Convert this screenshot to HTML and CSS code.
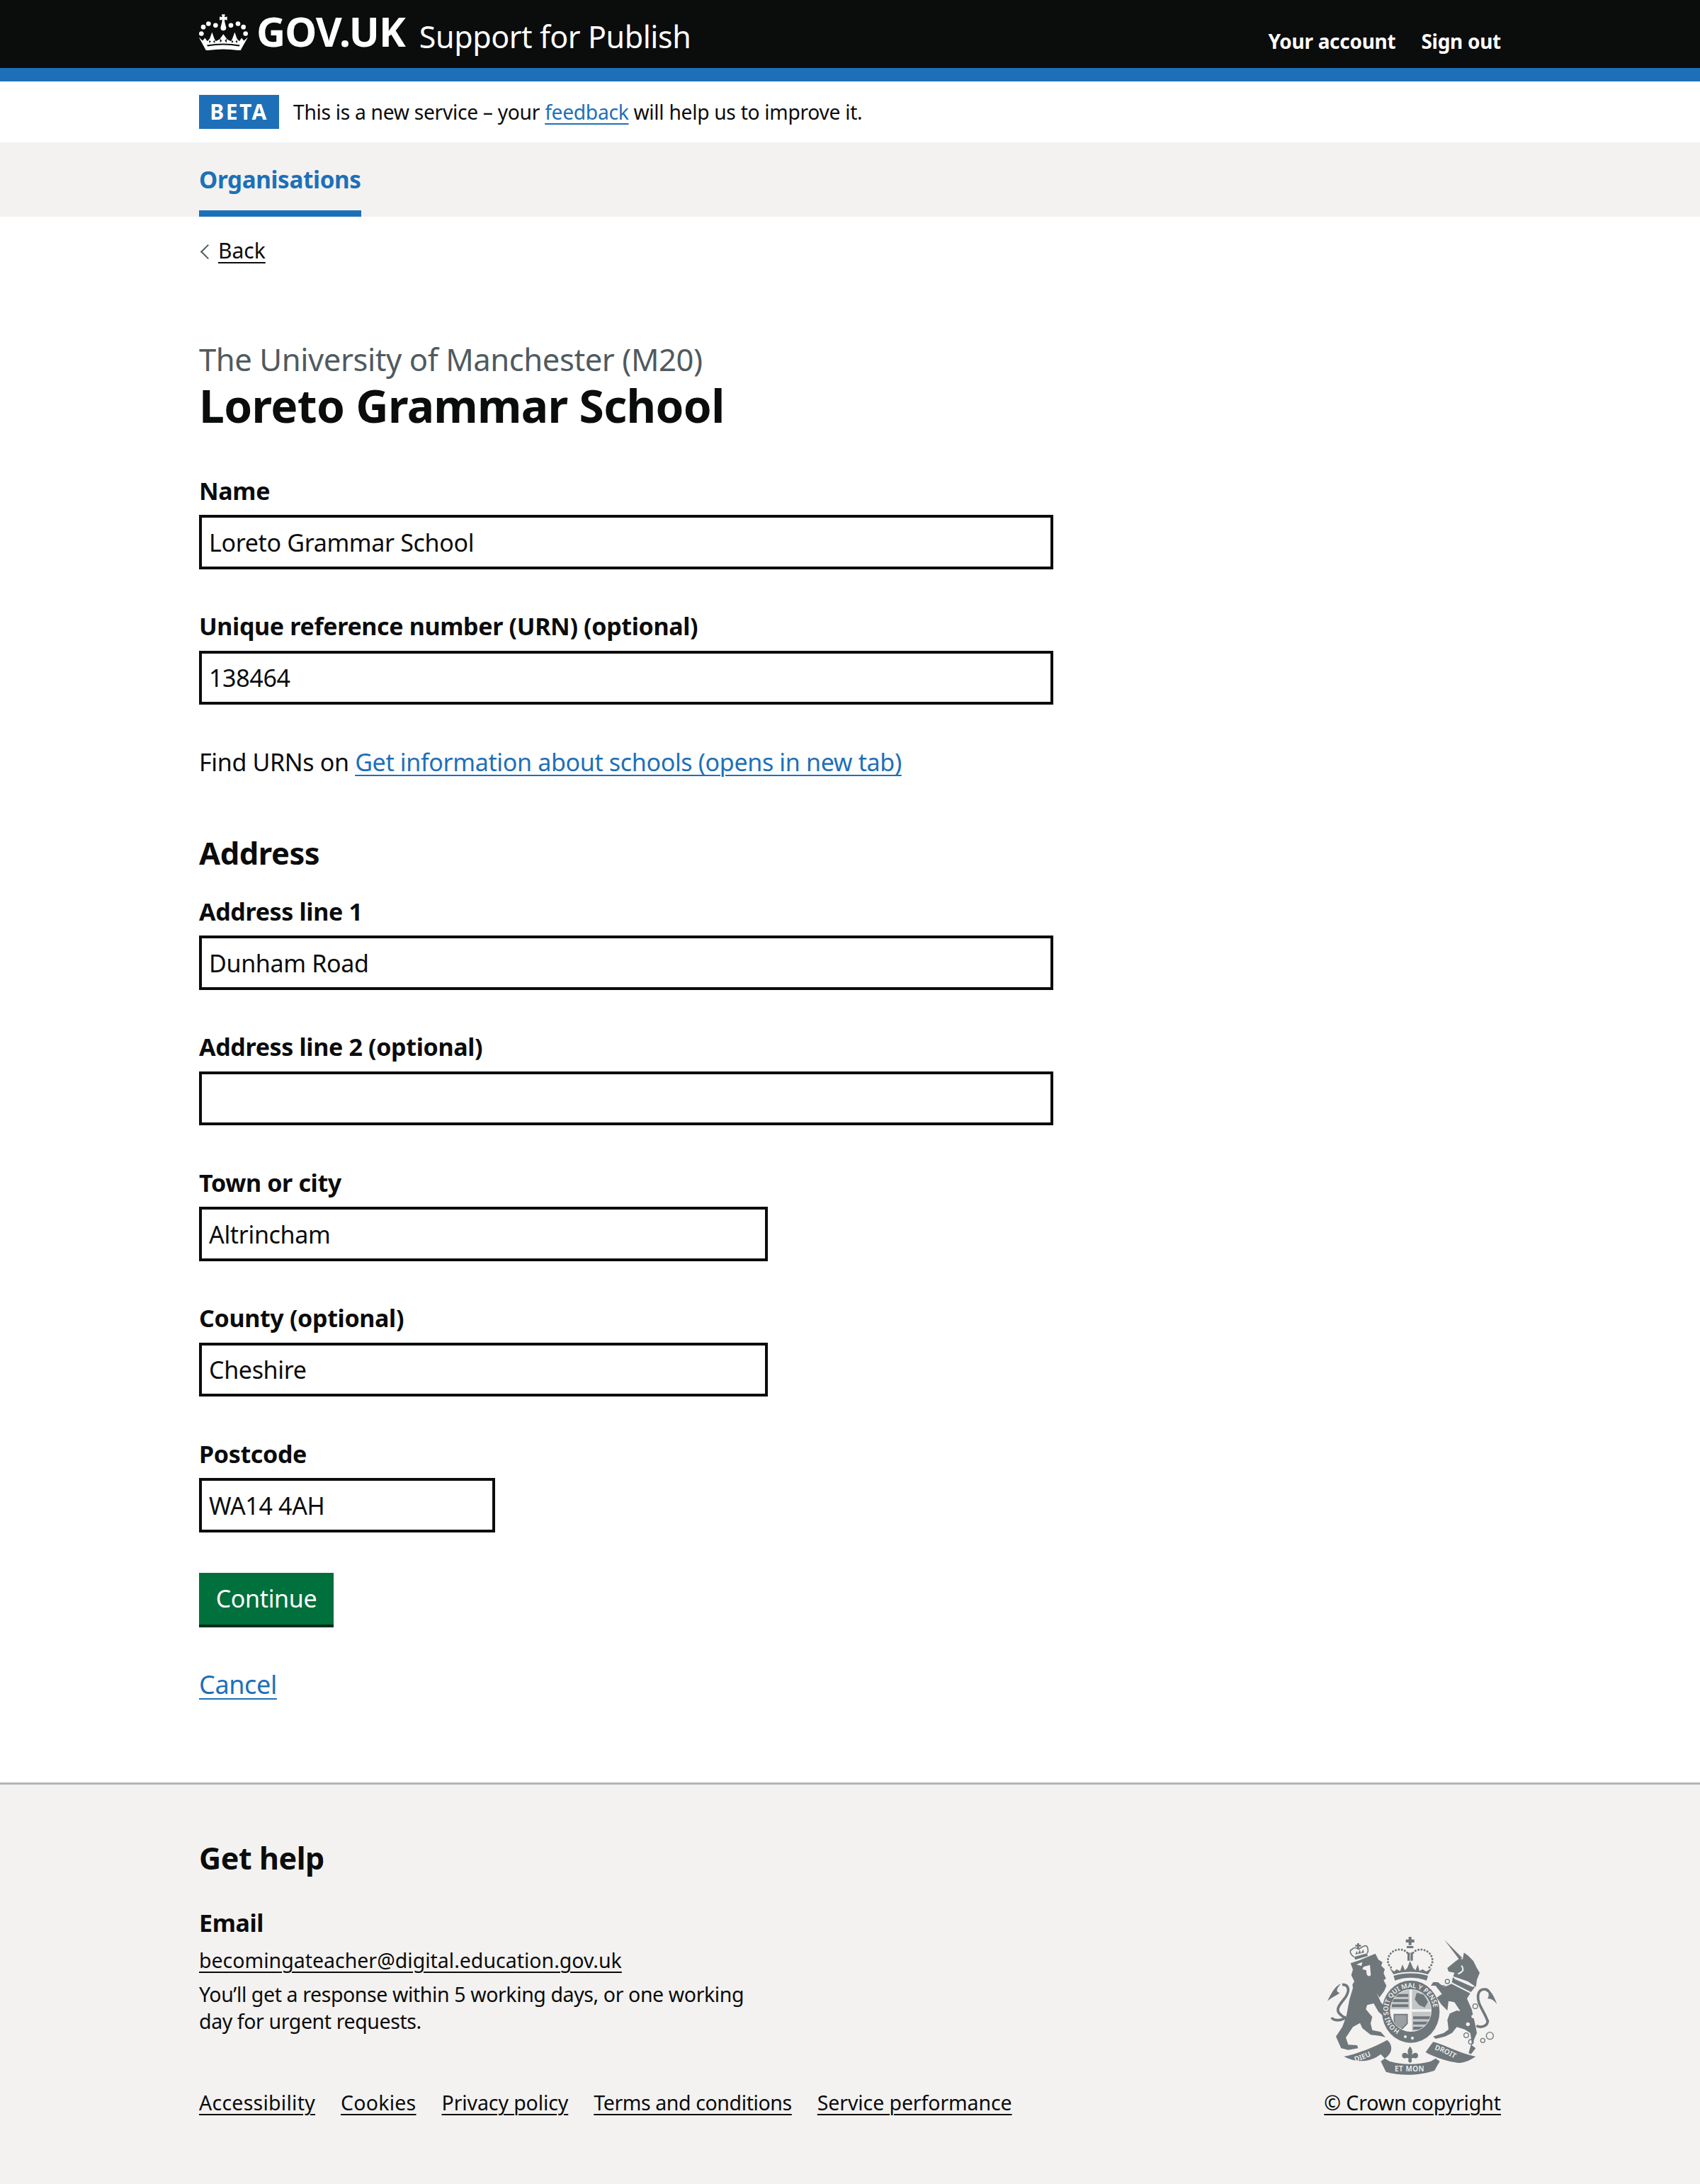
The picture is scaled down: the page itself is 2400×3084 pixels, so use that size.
FILE: index.html
```html
<!DOCTYPE html>
<html lang="en">
<head>
<meta charset="utf-8">
<title>Loreto Grammar School - Support for Publish</title>
<link rel="stylesheet" href="styles.css">
</head>
<body>
<header class="top">
  <div class="wrap top-inner">
    <a class="brand" href="#">
      <svg class="crown" viewBox="15 18 207 152" aria-hidden="true">
        <g fill="#fff">
          <path d="M111 18h14l-2 12 11-2v15l-11-2 1 10 6 24c0 8-5 12-12 12s-12-4-12-12l6-24 1-10-11 2V28l11 2z"/>
          <circle cx="85" cy="65" r="10"/><circle cx="55" cy="58" r="10"/><circle cx="33" cy="72" r="10"/><circle cx="25" cy="100" r="10"/>
          <circle cx="150" cy="65" r="10"/><circle cx="180" cy="58" r="10"/><circle cx="203" cy="72" r="10"/><circle cx="212" cy="100" r="10"/>
          <path d="M45 172Q118 160 190 172L222 115 205 130 195 118 186 132 176 122 166 94 156 122 150 132 134 124 118 102 102 124 86 132 80 122 70 94 60 122 50 132 40 118 30 130 14 115Z"/>
        </g>
        <g fill="#0b0c0c">
          <path d="M48 148Q118 136 188 148L185 154Q118 142 51 154Z"/>
          <path d="M58 128l8 6-8 6zM82 128l-8 6 8 6zM104 122l8 8-8 8zM132 122l-8 8 8 8zM153 128l8 6-8 6zM177 128l-8 6 8 6z"/>
        </g>
      </svg>
      <span class="gov">GOV.UK</span>
    </a>
    <a class="service" href="#">Support for Publish</a>
    <nav class="account">
      <a href="#">Your account</a>
      <a href="#">Sign out</a>
    </nav>
  </div>
</header>

<div class="wrap banner">
  <strong class="tag">Beta</strong>
  <span class="banner-text">This is a new service – your <a class="link" href="#">feedback</a> will help us to improve it.</span>
</div>

<nav class="subnav">
  <div class="wrap"><a class="subnav-item" href="#">Organisations</a></div>
</nav>

<main class="wrap">
  <a class="back" href="#">Back</a>

  <form class="form">
    <span class="caption">The University of Manchester (M20)</span>
    <h1 class="title">Loreto Grammar School</h1>

    <div class="field">
      <label class="label" for="name">Name</label>
      <input class="input" id="name" value="Loreto Grammar School">
    </div>
    <div class="field">
      <label class="label" for="urn">Unique reference number (URN) (optional)</label>
      <input class="input" id="urn" value="138464">
    </div>
    <p class="body">Find URNs on <a class="link" href="#">Get information about schools (opens in new tab)</a></p>

    <h2 class="section">Address</h2>
    <div class="field">
      <label class="label" for="a1">Address line 1</label>
      <input class="input" id="a1" value="Dunham Road">
    </div>
    <div class="field">
      <label class="label" for="a2">Address line 2 (optional)</label>
      <input class="input" id="a2" value="">
    </div>
    <div class="field">
      <label class="label" for="town">Town or city</label>
      <input class="input w-two-thirds" id="town" value="Altrincham">
    </div>
    <div class="field">
      <label class="label" for="county">County (optional)</label>
      <input class="input w-two-thirds" id="county" value="Cheshire">
    </div>
    <div class="field">
      <label class="label" for="postcode">Postcode</label>
      <input class="input w-third" id="postcode" value="WA14 4AH">
    </div>
    <button class="button" type="button">Continue</button>
    <p class="cancel"><a class="link" href="#">Cancel</a></p>
  </form>
</main>

<footer class="footer">
  <div class="wrap footer-inner">
    <div class="footer-left">
      <h2 class="help-title">Get help</h2>
      <h3 class="help-sub">Email</h3>
      <p class="help-line"><a class="flink" href="#">becomingateacher@digital.education.gov.uk</a></p>
      <p class="help-text">You’ll get a response within 5 working days, or one working day for urgent requests.</p>
      <ul class="footer-links">
        <li><a class="flink" href="#">Accessibility</a></li>
        <li><a class="flink" href="#">Cookies</a></li>
        <li><a class="flink" href="#">Privacy policy</a></li>
        <li><a class="flink" href="#">Terms and conditions</a></li>
        <li><a class="flink" href="#">Service performance</a></li>
      </ul>
    </div>
    <div class="footer-right">
      <svg class="crest" viewBox="0 0 780 630" role="img" aria-label="Royal coat of arms">
        <defs>
          <clipPath id="shield"><ellipse cx="395" cy="345" rx="86" ry="88"/></clipPath>
          <path id="ring" d="M395 441a96 96 0 1 1 .1 0"/>
          <path id="dieu" d="M160 562C195 552 230 538 270 515"/>
          <path id="droit" d="M495 510C535 522 575 545 610 568"/>
        </defs>
        <g class="c-fill">
          <!-- lion -->
          <path d="M140 145L178 132 245 104 258 130 275 140 270 155 285 170 280 187 290 210 280 217 292 240 283 262 262 290 250 270 268 310 298 345 310 372 292 395 282 372 258 350 238 315 210 322 205 340 232 372 225 400 232 428 268 436 288 458 262 452 225 448 190 420 180 398 150 415 120 460 130 490 168 492 172 505 130 512 100 505 78 455 105 415 122 370 135 300 150 250 148 235 156 222 143 195 150 172Z"/>
          <path d="M100 232C75 240 60 270 42 305 60 290 75 285 95 270 80 270 75 255 100 232Z"/>
          <path class="c-line" d="M122 372C95 395 65 385 60 375M115 375C70 350 85 330 110 300 140 265 135 235 105 235"/>
          <path d="M155 118L210 103 213 114 160 130Z"/>
          <path d="M168 60h8v7h8v7h-8v12h-8V74h-8v-7h8z"/>
          <path class="c-thin" d="M155 118C135 105 135 88 148 85 155 72 172 85 175 85 185 78 210 60 212 80 216 90 212 100 210 103"/>
          <path d="M160 108l6-16 5 13 8-18 5 15 10-16 3 14z"/>
        </g>
        <path class="c-bg" d="M165 150L190 140 186 156ZM195 160L222 152 226 195C216 206 205 195 207 175L190 170Z"/>
        <g class="c-fill">
          <!-- central crown -->
          <path d="M386 33h12v11h12v13h-12v11h-12V57h-12V44h12zM378 72h28v9h-28zM381 100h10v34h-10zM394 100h10v34h-10z"/>
          <path class="c-thin c-dash" d="M380 100C365 80 315 80 300 120 295 140 300 155 315 165M405 100C420 80 470 80 485 120 490 140 485 155 470 165"/>
          <path d="M305 165L322 192C365 178 425 178 468 192L485 165 460 180 445 170 432 178 425 150 415 175 405 165 392 135 380 165 370 175 360 150 350 178 335 170 325 180Z"/>
          <path d="M322 198C365 184 425 184 468 198L462 218C420 202 370 202 328 218Z"/>
          <!-- garter -->
          <ellipse cx="395" cy="350" rx="122" ry="132"/>
        </g>
        <ellipse class="c-bg" cx="395" cy="345" rx="88" ry="90"/>
        <g clip-path="url(#shield)">
          <path class="c-tex" d="M305 255h85v85h-85zM400 255h85v85h-85zM400 350h85v85h-85z"/>
          <path class="c-dark" d="M315 275h70v12h-70zM315 297h70v12h-70zM315 319h70v12h-70zM405 370h75v12h-75zM405 392h75v12h-75zM405 414h75v12h-75zM420 270l30 8 18 30-14 24-24-10-18-24z"/>
          <path class="c-harp" d="M325 362h55v38l-27 28-28-28z"/>
        </g>
        <circle class="c-bg" cx="372" cy="456" r="6"/>
        <circle class="c-bg" cx="402" cy="462" r="6"/>
        <text class="c-text c-ring"><textPath href="#ring" startOffset="8%">HONI SOIT QUI MAL Y PENSE</textPath></text>
        <g class="c-fill">
          <path d="M112 540C165 530 240 500 295 470 320 490 320 525 285 548L268 530C230 560 170 572 112 540Z"/>
          <path d="M268 560L285 548 305 560C360 576 425 576 480 560L500 548 518 560 495 600C430 622 345 622 290 605Z"/>
          <path d="M490 478C540 490 600 525 670 540 640 562 600 572 585 565 550 560 500 545 458 522 470 505 480 490 490 478Z"/>
          <path d="M392 497C402 510 405 520 398 535 405 525 418 520 425 530 430 545 415 552 408 545L398 548 400 560 392 568 384 560 386 548 376 545C369 552 354 545 359 530 366 520 379 525 386 535 379 520 382 510 392 497Z"/>
        </g>
        <text class="c-text c-motto"><textPath href="#dieu">DIEU</textPath></text>
        <text class="c-text c-motto" x="390" y="604" text-anchor="middle">ET MON</text>
        <text class="c-text c-motto"><textPath href="#droit">DROIT</textPath></text>
        <!-- unicorn -->
        <g class="c-fill" transform="translate(375 0)">
          <path d="M162 45L238 122 226 130Z"/>
          <path d="M175 165L205 140 225 125 240 128 245 100 262 112 285 135 300 165 312 185 300 215 296 245 262 222 200 200 205 185 180 180Z"/>
          <path d="M198 205L292 245 275 267 194 226Z"/>
          <path d="M192 232L272 272 258 295 278 340 292 400 300 440 278 492 295 505 275 530 265 525 278 480 272 440 248 425 215 415 195 440 165 455 125 465 115 455 160 440 180 425 175 385 185 358 215 345 230 348 205 310 180 305 175 345 150 320 130 290 152 275 125 240 105 240 115 225 135 225 160 245 175 240Z"/>
          <path d="M340 250C360 260 375 290 385 318 370 300 360 295 345 295 355 280 350 265 335 255Z"/>
          <path class="c-line" d="M298 410C320 420 350 410 345 385M347 395C335 350 300 320 305 280 310 250 340 250 350 265"/>
          <path class="c-gap" d="M235 155C245 170 245 180 220 190M205 208L285 243"/>
          <circle class="c-bg" cx="285" cy="370" r="8"/><circle class="c-bg" cx="262" cy="403" r="8"/>
        </g>
        <g class="c-rings" transform="translate(375 0)">
          <circle cx="175" cy="222" r="9"/><circle cx="158" cy="247" r="7"/><circle cx="165" cy="300" r="9"/>
          <circle cx="293" cy="327" r="10"/><circle cx="255" cy="450" r="10"/><circle cx="275" cy="478" r="10"/>
          <circle cx="325" cy="472" r="9"/><circle cx="355" cy="452" r="15"/>
        </g>
      </svg>
      <a class="flink" href="#">© Crown copyright</a>
    </div>
  </div>
</footer>
</body>
</html>
```
FILE: styles.css
```css
* { box-sizing: border-box; letter-spacing: -.01em; }
html, body { margin: 0; padding: 0; }
body {
  font-family: "Noto Sans", "Liberation Sans", sans-serif;
  font-size: 34px;
  line-height: 47.9px;
  color: #0b0c0c;
  background: #fff;
}
a { color: inherit; }
.wrap { width: 1838px; margin: 0 auto; }

.top { background: #0b0c0c; border-bottom: 19px solid #1d70b8; height: 115px; color: #fff; }
.top-inner { display: flex; align-items: flex-start; height: 96px; }
.brand { display: flex; align-items: flex-start; color: #fff; text-decoration: none; padding-top: 20px; }
.crown { width: 69px; height: 51px; display: block; }
.gov { font-weight: 700; font-size: 57px; line-height: 48px; margin-left: 12px; letter-spacing: -1px; }
.service { color: #fff; text-decoration: none; font-size: 43px; line-height: 56px; margin: 24px 0 0 20px; }
.account { margin-left: auto; display: flex; gap: 36px; padding-top: 34px; }
.account a { color: #fff; font-weight: 700; font-size: 28px; line-height: 48px; text-decoration: none; }

.banner { height: 86px; display: flex; align-items: center; gap: 20px; font-size: 28.2px; }
.tag {
  background: #1d70b8; color: #fff; text-transform: uppercase;
  font-size: 30px; line-height: 48px; height: 48px; width: 113px; text-align: center; letter-spacing: 2.4px;
}
.banner-text { line-height: 40px; }
.link { color: #1d70b8; text-decoration-thickness: 2px; text-underline-offset: .16em; }

.subnav { background: #f3f2f1; height: 105px; }
.subnav-item {
  display: inline-block; height: 105px; padding-top: 29px; color: #1d70b8; font-weight: 700; text-decoration: none;
  border-bottom: 9px solid #1d70b8; font-size: 33.2px; line-height: 48px;
}

.back {
  display: inline-block; position: relative; margin-top: 29px; padding-left: 27px; font-size: 30px; line-height: 38px;
  text-decoration-thickness: 2px; text-underline-offset: .16em; letter-spacing: 0;
}
.back::before {
  content: ""; position: absolute; left: 5px; top: 13px; width: 13px; height: 13px;
  border-left: 2px solid #505a5f; border-bottom: 2px solid #505a5f; transform: rotate(45deg);
}

.form { padding-top: 102px; }
.caption { display: block; color: #505a5f; font-size: 43.6px; line-height: 56px; }
.title { font-size: 64px; line-height: 76px; margin: 0 0 59px; font-weight: 700; }
.field { margin-bottom: 57.4px; }
.label { display: block; font-weight: 700; margin-bottom: 9.6px; font-size: 34px; line-height: 47.9px; }
.input {
  display: block; width: 1206px; height: 76.6px; border: 4px solid #0b0c0c; padding: 8px 10px; border-radius: 0;
  font: inherit; color: #0b0c0c; background: #fff; outline: 0;
}
.w-two-thirds { width: 803px; }
.w-third { width: 418px; }
.body { margin: 0 0 75px; }
.section { font-size: 43.5px; line-height: 56px; margin: 0 0 32px; font-weight: 700; }
.button {
  display: block; width: 190px; height: 77px; background: #00703c; color: #fff; border: 0; border-radius: 0;
  font: inherit; padding: 0 0 4px; box-shadow: inset 0 -4px 0 #002d18; margin: 0 0 57px;
}
.cancel { margin: 0 0 114px; font-size: 36px; }

.footer { background: #f3f2f1; border-top: 3px solid #b1b4b6; height: 567px; font-size: 28.5px; line-height: 38px; }
.footer * { letter-spacing: 0; }
.footer-inner { display: flex; justify-content: space-between; align-items: flex-end; padding-top: 76px; }
.footer-left { flex: 1; }
.footer .help-title { font-size: 43px; line-height: 56px; margin: 0 0 39px; font-weight: 700; letter-spacing: -.01em; }
.footer .help-sub { font-size: 34px; line-height: 48px; margin: 0 0 10px; font-weight: 700; letter-spacing: -.01em; }
.help-line { margin: 0 0 10px; }
.footer .help-text { margin: 0; width: 800px; letter-spacing: -.4px; }
.flink { color: #0b0c0c; text-decoration-thickness: 2px; text-underline-offset: .16em; }
.footer-right { display: flex; flex-direction: column; align-items: flex-end; flex: none; }
.footer-right .flink { letter-spacing: -.1px; }
.crest { display: block; width: 260px; height: 210px; margin: 0 -1px 16px 0; flex: none; }
.c-fill { fill: #6f777b; }
.c-bg { fill: #f3f2f1; }
.c-line { fill: none; stroke: #6f777b; stroke-width: 11; }
.c-thin { fill: none; stroke: #6f777b; stroke-width: 5; }
.c-gap { fill: none; stroke: #f3f2f1; stroke-width: 6; }
.c-dash { stroke-width: 9; stroke-dasharray: .1 13; stroke-linecap: round; }
.c-tex { fill: #c3c6c8; }
.c-dark { fill: #6f777b; }
.c-harp { fill: #9aa0a3; stroke: #6f777b; stroke-width: 5; }
.c-rings { fill: none; stroke: #6f777b; stroke-width: 4; }
.footer .c-text { fill: #f3f2f1; font-family: "Noto Sans", sans-serif; font-weight: 600; }
.footer .c-ring { font-size: 28px; letter-spacing: 1.6px; }
.footer .c-motto { font-size: 30px; letter-spacing: 1.5px; }
.footer-links { display: flex; gap: 36px; list-style: none; margin: 77px 0 0; padding: 0; }
.footer-links li:nth-child(1) .flink, .footer-links li:nth-child(2) .flink { letter-spacing: .25px; }
.footer-links li:nth-child(3) .flink, .footer-links li:nth-child(5) .flink { letter-spacing: -.1px; }
.footer-links li:nth-child(4) .flink { letter-spacing: -.4px; }
```
